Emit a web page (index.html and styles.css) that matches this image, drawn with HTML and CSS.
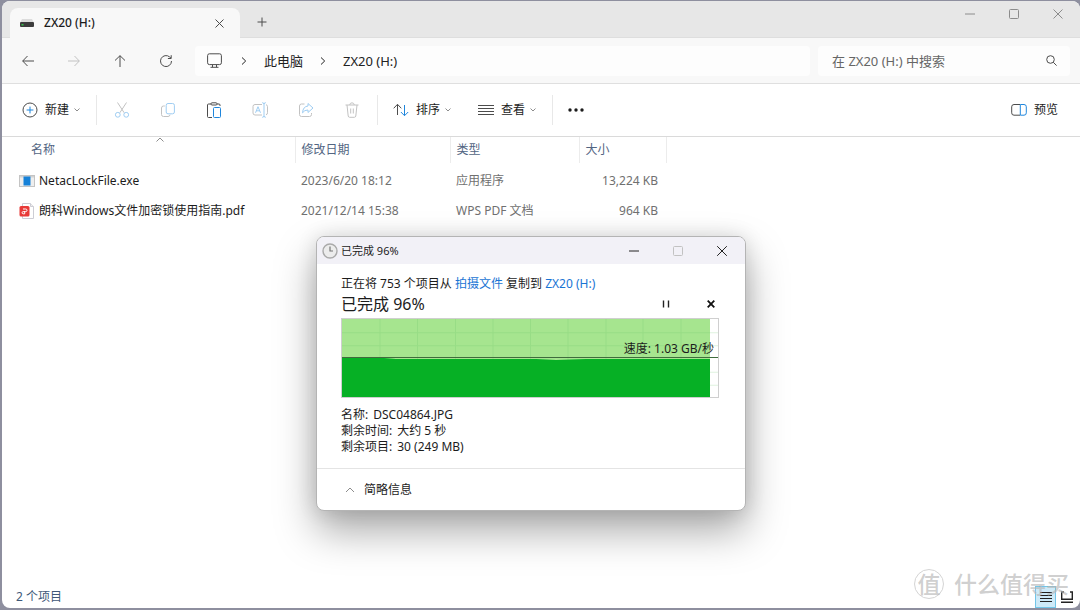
FILE: index.html
```html
<!DOCTYPE html>
<html lang="zh-CN">
<head>
<meta charset="utf-8">
<meta name="viewport" content="width=device-width, initial-scale=1">
<title>ZX20 (H:)</title>
<link rel="stylesheet" href="styles.css">
</head>
<body>
<main class="explorer">
  <header class="titlebar">
    <div class="tab">
      <svg class="drive" width="14" height="8" viewBox="0 0 14 8"><path d="M2 0h10l1.500 3h-13z" fill="#dcdcdc"/><rect y="3" width="14" height="5" rx="1" fill="#3c3c3c"/><rect x="1.500" y="5" width="2" height="1.500" fill="#37c24a"/></svg>
      <span class="tab-title">ZX20 (H:)</span>
      <button class="plain tab-close" aria-label="关闭标签页"><svg width="9" height="9" viewBox="0 0 9 9"><path d="M.5.5l8 8M8.500.5l-8 8" class="ink"/></svg></button>
    </div>
    <button class="plain new-tab" aria-label="新建标签页"><svg width="10" height="10" viewBox="0 0 10 10"><path d="M5 .5v9M.5 5h9" class="ink"/></svg></button>
    <div class="window-controls">
      <button class="plain" aria-label="最小化"><svg width="10" height="10" viewBox="0 0 10 10"><path d="M0 5h10" class="soft"/></svg></button>
      <button class="plain" aria-label="最大化"><svg width="10" height="10" viewBox="0 0 10 10"><rect x=".5" y=".5" width="9" height="9" rx="1" class="soft"/></svg></button>
      <button class="plain" aria-label="关闭"><svg width="10" height="10" viewBox="0 0 10 10"><path d="M.5.5l9 9M9.500.5l-9 9" class="soft"/></svg></button>
    </div>
  </header>

  <nav class="navbar">
    <div class="nav-buttons">
      <button class="plain" aria-label="后退"><svg width="12" height="12" viewBox="0 0 12 12"><path d="M12 6H.7M5.500 1L.7 6l4.800 5" class="ink"/></svg></button>
      <button class="plain" aria-label="前进" disabled><svg width="12" height="12" viewBox="0 0 12 12"><path d="M0 6h11.300M6.500 1l4.800 5-4.800 5" class="faint"/></svg></button>
      <button class="plain" aria-label="向上"><svg width="12" height="12" viewBox="0 0 12 12"><path d="M6 12V.7M1 5.500L6 .7l5 4.800" class="ink"/></svg></button>
      <button class="plain" aria-label="刷新"><svg width="12" height="12" viewBox="0 0 12 12"><path d="M11.500 6A5.500 5.500 0 1 1 9.700 2L11 3.200M11.200.2v3.300H7.900" class="ink"/></svg></button>
    </div>
    <div class="address">
      <svg class="monitor" width="15" height="15" viewBox="0 0 15 15"><rect x=".6" y=".8" width="13.800" height="10.800" rx="1.800" class="ink"/><path d="M5.500 11.800v2.400M9.500 11.800v2.400M3.500 14.300h8" class="ink"/></svg>
      <svg class="crumb-arrow" width="6" height="8" viewBox="0 0 6 8"><path d="M1 .5L4.700 4 1 7.500" class="dark"/></svg>
      <a class="crumb" href="#">此电脑</a>
      <svg class="crumb-arrow" width="6" height="8" viewBox="0 0 6 8"><path d="M1 .5L4.700 4 1 7.500" class="dark"/></svg>
      <a class="crumb" href="#">ZX20 (H:)</a>
    </div>
    <label class="search">
      <input type="text" placeholder="在 ZX20 (H:) 中搜索" aria-label="搜索">
      <svg width="11" height="11" viewBox="0 0 11 11"><circle cx="4.500" cy="4.500" r="3.800" class="ink"/><path d="M7.300 7.300l3.300 3.300" class="ink"/></svg>
    </label>
  </nav>

  <div class="toolbar">
    <button class="plain tool new"><svg width="16" height="16" viewBox="0 0 16 16"><circle cx="8" cy="8" r="7" class="ink"/><path d="M8 4.600v6.800M4.600 8h6.800" class="blue"/></svg>新建<svg class="caret" width="6" height="4" viewBox="0 0 6 4"><path d="M.5.5L3 3 5.500.5" class="soft"/></svg></button>
    <span class="divider"></span>
    <button class="plain icon-tool" aria-label="剪切" disabled><svg width="16" height="16" viewBox="0 0 16 16"><path d="M3.500.5l6.700 10.300M12.500.5L5.800 10.800" class="faint"/><circle cx="3.800" cy="12.800" r="2.400" class="pale"/><circle cx="12.200" cy="12.800" r="2.400" class="pale"/></svg></button>
    <button class="plain icon-tool" aria-label="复制" disabled><svg width="16" height="16" viewBox="0 0 16 16"><path d="M4.800 4H3.500A2 2 0 0 0 1.500 6v6.500a2 2 0 0 0 2 2h4.500a2 2 0 0 0 2-1.800" class="faint"/><rect x="6.200" y="1.500" width="8.200" height="10.300" rx="1.800" class="pale"/></svg></button>
    <button class="plain icon-tool" aria-label="粘贴"><svg width="16" height="16" viewBox="0 0 16 16"><path d="M5 2H2.500Q1.500 2 1.500 3v11.500q0 1 1 1H6M11 2h2q1 0 1 1v1" class="ink"/><rect x="5" y=".8" width="6" height="2.200" rx="1" class="ink"/><rect x="7.500" y="5.500" width="7" height="10" rx="1" class="blue"/></svg></button>
    <button class="plain icon-tool" aria-label="重命名" disabled><svg width="16" height="16" viewBox="0 0 16 16"><path d="M10 2.500H3a2 2 0 0 0-2 2v6.500a2 2 0 0 0 2 2h7M14 2.700q1.500.3 1.500 2v6q0 1.800-1.500 2.200" class="faint"/><path d="M12 1v14M10.200.7Q12 .7 12 2 12 .7 13.800.7M10.200 15.300Q12 15.300 12 14 12 15.300 13.800 15.300M3.500 10.800L6 4.700l2.500 6.100M4.300 8.800h3.400" class="pale"/></svg></button>
    <button class="plain icon-tool" aria-label="共享" disabled><svg width="16" height="16" viewBox="0 0 16 16"><path d="M6.500 2H3.500a2 2 0 0 0-2 2v8.500a2 2 0 0 0 2 2h8a2 2 0 0 0 2-2V11" class="faint"/><path d="M10 1.500L15 6l-5 4.500V8Q6.500 7.800 4.500 10.800 5 4.500 10 4z" class="pale"/></svg></button>
    <button class="plain icon-tool" aria-label="删除" disabled><svg width="16" height="16" viewBox="0 0 16 16"><path d="M1.500 3h13M5.700 3Q6 .8 8 .8T10.300 3M3 3l1.200 11q.2 1.300 1.400 1.300h4.800q1.200 0 1.400-1.300L13 3M6.700 6.500v5M9.300 6.500v5" class="faint"/></svg></button>
    <span class="divider"></span>
    <button class="plain tool"><svg width="16" height="16" viewBox="0 0 16 16"><path d="M4.500 13V2.500M.7 6.300l3.800-4 3.800 4" class="ink"/><path d="M11.500 3v10.500M7.900 10l3.600 3.700L15.200 10" class="blue"/></svg>排序<svg class="caret" width="6" height="4" viewBox="0 0 6 4"><path d="M.5.5L3 3 5.500.5" class="soft"/></svg></button>
    <button class="plain tool view"><svg width="16" height="16" viewBox="0 0 16 16"><path d="M0 3.500h16M0 6.500h16M0 9.500h16M0 12.500h16" class="ink"/></svg>查看<svg class="caret" width="6" height="4" viewBox="0 0 6 4"><path d="M.5.5L3 3 5.500.5" class="soft"/></svg></button>
    <span class="divider"></span>
    <button class="plain icon-tool" aria-label="更多"><svg width="16" height="16" viewBox="0 0 16 16"><g fill="#1c1c1c"><circle cx="2" cy="8" r="1.700"/><circle cx="8" cy="8" r="1.700"/><circle cx="14" cy="8" r="1.700"/></g></svg></button>
    <button class="plain tool preview"><svg width="16" height="16" viewBox="0 0 16 16"><path d="M9 2.500H3a2.300 2.300 0 0 0-2.300 2.300v6A2.300 2.300 0 0 0 3 13.200h6" class="ink"/><path d="M9.300 2.500H13a2.300 2.300 0 0 1 2.300 2.300v6a2.300 2.300 0 0 1-2.300 2.400H9.300z" class="blue"/></svg>预览</button>
  </div>

  <section class="files">
    <table class="file-table">
      <colgroup><col class="c-name"><col class="c-date"><col class="c-type"><col class="c-size"><col></colgroup>
      <thead><tr><th class="name-head">名称<svg class="sort-mark" width="8" height="5" viewBox="0 0 8 5"><path d="M.5 4.500L4 1l3.500 3.500" class="soft"/></svg></th><th>修改日期</th><th>类型</th><th>大小</th><th></th></tr></thead>
      <tbody>
        <tr><td class="name"><div class="file"><svg width="16" height="16" viewBox="0 0 16 16"><rect x=".5" y="2.500" width="15" height="11" fill="#eee" stroke="#c4c4c4"/><path d="M1 3h14v1.500H1z" fill="#d2d2d2"/><rect x="4.500" y="3.500" width="7" height="9" fill="#1681d8"/></svg><span>NetacLockFile.exe</span></div></td><td>2023/6/20 18:12</td><td>应用程序</td><td class="num">13,224 KB</td><td></td></tr>
        <tr><td class="name"><div class="file"><svg width="16" height="16" viewBox="0 0 16 16"><path d="M3.500.5h8l3 3v12h-11z" fill="#fff" stroke="#cdcdd4"/><path d="M11.500.5v3h3" fill="#eee" stroke="#cdcdd4"/><rect x=".5" y="3" width="10" height="10.500" rx="1.500" fill="#e83a38"/><path d="M4 6h2.700a1.300 1.300 0 0 1 0 2.600H4.200a1.100 1.100 0 0 0 0 2.200h1.500V8.600" fill="none" stroke="#fff"/></svg><span>朗科Windows文件加密锁使用指南.pdf</span></div></td><td>2021/12/14 15:38</td><td>WPS PDF 文档</td><td class="num">964 KB</td><td></td></tr>
      </tbody>
    </table>
  </section>

  <footer class="statusbar">
    <span class="count">2 个项目</span>
    <div class="view-modes">
      <button class="plain mode selected" aria-label="详细信息"><svg width="12" height="12" viewBox="0 0 12 12"><path d="M0 1.500h12M0 4.500h12M0 7.500h12M0 10.500h12" stroke="#222"/></svg></button>
      <button class="plain mode" aria-label="大图标"><svg width="12" height="12" viewBox="0 0 12 12"><path d="M3 1H.7v7.300h10.600V1H9M0 11.200h12" fill="none" stroke="#222" stroke-width="1.400"/></svg></button>
    </div>
  </footer>

  <div class="watermark"><span class="seal">值</span><span>什么值得买</span></div>
</main>

<section class="dialog" role="dialog" aria-labelledby="dialog-title">
  <header class="dialog-bar">
    <svg width="16" height="16" viewBox="0 0 16 16"><circle cx="8" cy="8" r="7" fill="#ececec" stroke="#aaa" stroke-width="1.400"/><path d="M8 3.500V8h3" fill="none" stroke="#777" stroke-width="1.200"/></svg>
    <h1 id="dialog-title">已完成 96%</h1>
    <div class="dialog-controls">
      <button class="plain" aria-label="最小化"><svg width="10" height="10" viewBox="0 0 10 10"><path d="M0 5h10" class="dark"/></svg></button>
      <button class="plain" aria-label="最大化" disabled><svg width="10" height="10" viewBox="0 0 10 10"><rect x=".5" y=".5" width="9" height="9" rx="1" class="faint"/></svg></button>
      <button class="plain" aria-label="关闭"><svg width="10" height="10" viewBox="0 0 10 10"><path d="M.2.2l9.600 9.600M9.800.2L.2 9.800" class="dark"/></svg></button>
    </div>
  </header>
  <div class="dialog-body">
    <p>正在将 753 个项目从 <a href="#">拍摄文件</a> 复制到 <a href="#">ZX20 (H:)</a></p>
    <div class="progress-row">
      <h2>已完成 96%</h2>
      <button class="plain" aria-label="暂停"><svg width="8" height="8" viewBox="0 0 8 8"><path d="M1.500.5v7M6.500.5v7" stroke="#222" stroke-width="1.400"/></svg></button>
      <button class="plain" aria-label="取消"><svg width="8" height="8" viewBox="0 0 8 8"><path d="M.7.7l6.600 6.600M7.300.7L.7 7.300" stroke="#111" stroke-width="1.800"/></svg></button>
    </div>
    <div class="chart">
      <svg class="plot" viewBox="0 0 376 77" preserveAspectRatio="none">
        <rect width="368" height="77" fill="#a6e58f"/>
        <path d="M38 0v77M75.500 0v77M113.500 0v77M151 0v77M188.500 0v77M226 0v77M264 0v77M301 0v77M339 0v77M0 13.500h368M0 26.500h368" stroke="#98dd86" fill="none"/>
        <path d="M368 13.500h8M368 26.500h8M368 52.500h8M368 65.500h8" stroke="#dff3df"/>
        <path d="M0 38h36l18 1.500h140l20 1 30-1h124v37.500H0z" fill="#06b025"/>
        <path d="M0 38h376" stroke="#3f6b3d"/>
      </svg>
      <span class="speed">速度: 1.03 GB/秒</span>
    </div>
    <dl>
      <div><dt>名称:</dt><dd>DSC04864.JPG</dd></div>
      <div><dt>剩余时间:</dt><dd>大约 5 秒</dd></div>
      <div><dt>剩余项目:</dt><dd>30 (249 MB)</dd></div>
    </dl>
  </div>
  <footer class="dialog-foot">
    <button class="plain"><svg width="10" height="6" viewBox="0 0 10 6"><path d="M1 5l4-4 4 4" class="soft"/></svg>简略信息</button>
  </footer>
</section>
</body>
</html>
```
FILE: styles.css
```css
* { box-sizing: border-box; }
body {
  margin: 0;
  min-height: 100vh;
  display: flex;
  padding: 1px 0 2px 2px;
  background: #8e8f9f;
  color: #1c1c1c;
  font: 12px/16px "Noto Sans", "Noto Sans CJK SC", sans-serif;
}
svg { display: block; flex: none; }
h1, h2, p, dl, dd { margin: 0; font-weight: 400; }
a { text-decoration: none; color: #1a74d4; }
.plain {
  display: flex;
  align-items: center;
  justify-content: center;
  padding: 0;
  border: 0;
  background: none;
  color: inherit;
  font: inherit;
}
.ink, .dark, .soft, .faint, .blue, .pale { fill: none; stroke-width: 1; }
.ink { stroke: #4c4c4c; }
.dark { stroke: #222; }
.soft { stroke: #8c8c8c; }
.faint { stroke: #c2c2c2; }
.blue { stroke: #1f86dc; }
.pale { stroke: #9fcdf2; }

.explorer {
  position: relative;
  flex: 1;
  display: flex;
  flex-direction: column;
  border-radius: 8px;
  background: #fff;
  overflow: hidden;
}

.titlebar {
  display: flex;
  align-items: flex-end;
  height: 37px;
  padding-left: 8px;
  background: #e7e7e7;
  border-bottom: 1px solid #dedede;
}
.tab {
  display: flex;
  align-items: center;
  width: 230px;
  height: 30px;
  margin-bottom: -1px;
  padding: 0 13px 0 10px;
  border-radius: 8px 8px 0 0;
  background: #f8f8f8;
}
.tab-title { margin-left: 10px; flex: 1; font-weight: 500; }
.tab-close { width: 16px; height: 16px; }
.new-tab { width: 44px; height: 30px; }
.window-controls { display: flex; align-self: flex-start; margin-left: auto; }
.window-controls .plain { width: 44px; height: 26px; }

.navbar {
  display: flex;
  align-items: center;
  gap: 8px;
  height: 46px;
  padding: 0 10px 0 3px;
  background: #f8f8f8;
  border-bottom: 1px solid #dfdfdf;
}
.nav-buttons { display: flex; margin-right: -2px; }
.nav-buttons .plain { width: 46px; height: 30px; }
.address, .search {
  display: flex;
  align-items: center;
  height: 30px;
  border-radius: 4px;
  background: #fdfdfd;
}
.address { flex: 1; padding-left: 12px; }
.monitor { margin-right: 19px; }
.crumb-arrow { margin-right: 17px; }
.crumb { margin-right: 17px; font-size: 13px; color: #222; }
.search { width: 252px; padding: 0 13px 0 14px; }
.search input {
  flex: 1;
  min-width: 0;
  padding: 0;
  border: 0;
  background: none;
  font: inherit;
  font-size: 13px;
}
.search input::placeholder { color: #666; opacity: 1; }

.toolbar {
  display: flex;
  align-items: center;
  height: 53px;
  padding: 0 22px 0 20px;
  border-bottom: 1px solid #dadada;
}
.tool { gap: 7px; height: 30px; }
.caret { margin-left: -2px; }
.new { margin-right: 16px; }
.view { margin: 0 16px 0 27px; }
.divider { width: 1px; height: 30px; margin-right: 2px; background: #e8e8e8; }
.icon-tool { width: 46px; height: 30px; }
.icon-tool + .divider { margin: 0 15px 0 2px; }
.view + .divider { margin-right: 0; }
.preview { margin-left: auto; }

.files { flex: 1; }
.file-table { width: 100%; table-layout: fixed; border-collapse: collapse; }
.c-name { width: 293px; }
.c-date { width: 155px; }
.c-type { width: 129px; }
.c-size { width: 87px; }
.file-table th {
  height: 26px;
  padding: 0 6px;
  color: #526582;
  font-weight: 400;
  text-align: left;
  border-right: 1px solid #ececec;
}
.file-table th:last-child { border: 0; }
.file-table .name-head { position: relative; padding-left: 29px; }
.sort-mark { position: absolute; left: 154px; top: 0; }
.file-table td { height: 30px; padding: 0 6px; color: #707070; white-space: nowrap; }
.file-table tbody tr:first-child td { height: 33px; padding-top: 3px; }
.file-table .name { padding-left: 17px; color: #1c1c1c; }
.file-table .num { padding-right: 8px; text-align: right; }
.file { display: flex; align-items: center; gap: 4px; }

.statusbar { display: flex; align-items: center; justify-content: space-between; height: 22px; padding: 0 3px 0 14px; color: #405878; }
.view-modes { display: flex; }
.mode { width: 21px; height: 22px; }
.selected { background: #cdeaf8; border: 1px solid #72c5e8; }

.watermark {
  position: absolute;
  right: 11px;
  bottom: 9px;
  display: flex;
  align-items: center;
  gap: 10px;
  color: rgba(180, 180, 180, .65);
  font-size: 23px;
  font-weight: 500;
  line-height: 30px;
  pointer-events: none;
}
.seal {
  width: 30px;
  height: 30px;
  border: 1px solid #d4d4d4;
  border-radius: 50%;
  line-height: 28px;
  text-align: center;
}

.dialog {
  position: absolute;
  left: 316px;
  top: 236px;
  width: 430px;
  border: 1px solid #b4b4b4;
  border-radius: 8px;
  background: #fff;
  box-shadow: 0 20px 40px rgba(0, 0, 0, .34), 0 0 20px rgba(0, 0, 0, .12);
  overflow: hidden;
}
.dialog-bar { display: flex; align-items: center; gap: 3px; height: 27px; padding: 0 1px 0 5px; background: #f2f1f7; }
.dialog-bar h1 { font-size: 11px; line-height: 16px; }
.dialog-controls { display: flex; margin-left: auto; }
.dialog-controls .plain { width: 44px; height: 27px; }
.dialog-body { padding: 12px 26px 13px 24px; }
.progress-row { display: flex; align-items: center; height: 24px; }
.progress-row h2 { flex: 1; font-size: 16px; line-height: 24px; }
.progress-row .plain { width: 16px; height: 16px; }
.progress-row .plain + .plain { margin-left: 29px; }
.chart { position: relative; height: 80px; margin-top: 2px; border: 1px solid #cfcfcf; }
.plot { width: 100%; height: 100%; }
.speed { position: absolute; right: 4px; top: 22px; }
.dialog-body dl { margin-top: 9px; }
.dialog-body dl div { display: flex; gap: 5px; }
.dialog-foot { padding: 12px 28px 11px; border-top: 1px solid #e4e4e4; }
.dialog-foot .plain { gap: 9px; height: 18px; }
```
